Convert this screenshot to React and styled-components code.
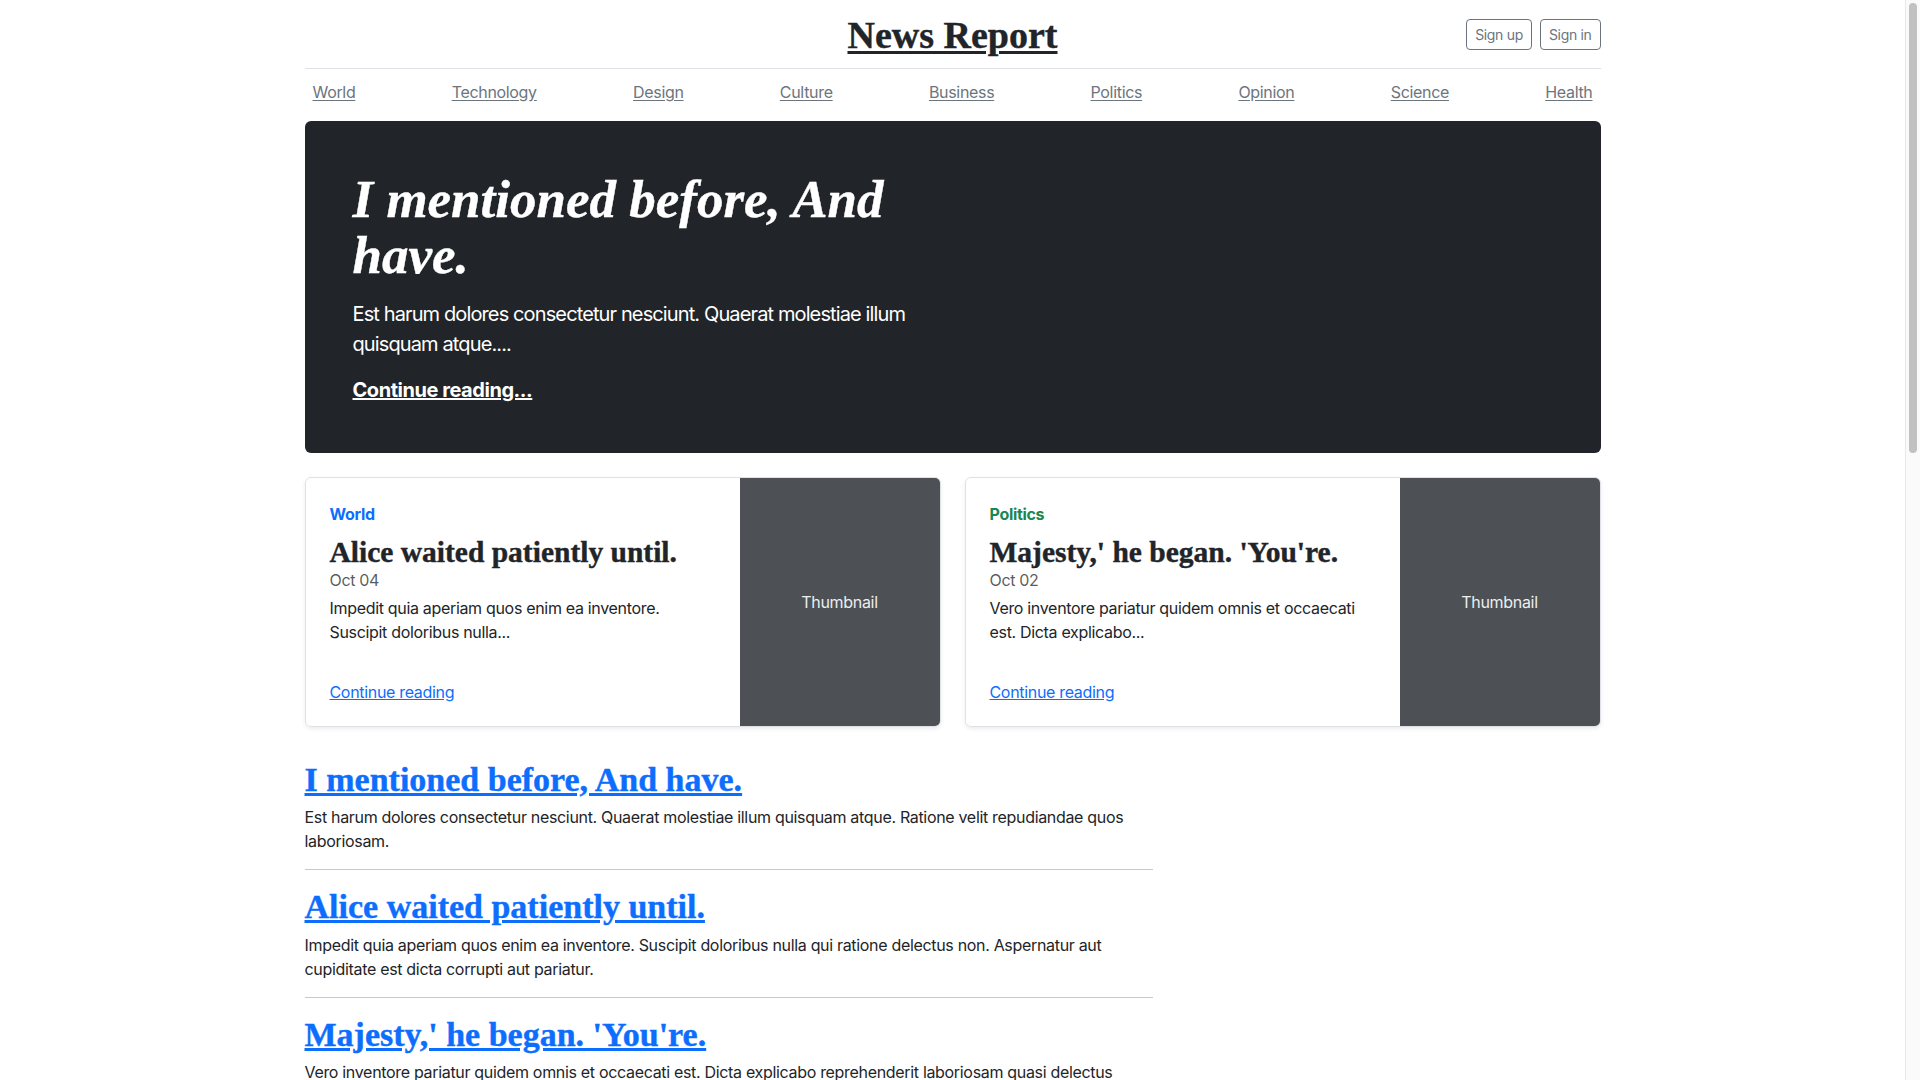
import React from 'react';
import styled, { createGlobalStyle, css } from 'styled-components';

const serif = `"Liberation Serif", "DejaVu Serif", serif`;

const GlobalStyle = createGlobalStyle`
  *, *::before, *::after { box-sizing: border-box; }
  html { scrollbar-width: none; }
  html::-webkit-scrollbar { display: none; }
  body {
    margin: 0;
    padding-right: 15px;
    font-family: Inter, "Liberation Sans", sans-serif;
    font-size: 16px;
    line-height: 1.5;
    letter-spacing: -0.32px;
    color: #212529;
    background: #fff;
  }
`;

// Classic window scrollbar drawn over the right edge
const ScrollTrack = styled.div`
  position: fixed;
  top: 0;
  right: 0;
  bottom: 0;
  width: 15px;
  padding: 3px 3px 0 3px;
  background: #fafafa;
  border-left: 1px solid #e8e8e8;
`;

const ScrollThumb = styled.div`
  height: 450px;
  border-radius: 4px;
  background: #c1c1c1;
`;

// Liberation Serif sits higher than the original display face; nudge the baseline down
const serifHeading = css`
  font-family: ${serif};
  font-weight: 700;
  letter-spacing: 0;
  padding-top: 2px;
  -webkit-text-stroke: 0.4px currentColor;
`;

const Container = styled.div`
  max-width: 1320px;
  margin: 0 auto;
  padding: 0 12px 48px;
`;

// Top bar with logo and auth buttons
const Header = styled.header`
  display: grid;
  grid-template-columns: 1fr auto 1fr;
  align-items: center;
  padding: 16px 0;
  line-height: 1;
  border-bottom: 1px solid #dee2e6;
`;

const Logo = styled.a`
  grid-column: 2;
  font-family: ${serif};
  font-weight: 700;
  font-size: 38px;
  line-height: 34px;
  padding-top: 2px;
  color: #212529;
  letter-spacing: 0;
  text-decoration: underline;
  text-underline-offset: 3px;
  -webkit-text-stroke: 0.4px currentColor;
`;

const Actions = styled.div`
  display: flex;
  justify-content: flex-end;
  gap: 8px;
`;

const OutlineButton = styled.a`
  display: inline-block;
  padding: 4px 8px;
  font-size: 14px;
  line-height: 21px;
  color: #6c757d;
  border: 1px solid #6c757d;
  border-radius: 4px;
  text-decoration: none;
`;

const Nav = styled.nav`
  display: flex;
  justify-content: space-between;
  padding: 3px 0 5px;
  margin-bottom: 4px;
`;

const NavLink = styled.a`
  padding: 8px;
  color: #6c757d;
  text-decoration: underline;
  text-underline-offset: 2px;
`;

// Dark featured banner
const Hero = styled.section`
  padding: 48px;
  margin-bottom: 24px;
  border-radius: 6px;
  background: #212529;
  color: #fff;
`;

const HeroContent = styled.div`
  max-width: 600px;
`;

const HeroTitle = styled.h1`
  ${serifHeading};
  margin: 0;
  font-style: italic;
  font-size: 53px;
  line-height: 56px;
`;

const Lead = styled.p`
  margin: ${(p) => (p.last ? '0' : '16px 0')};
  font-size: 20px;
  line-height: 30px;
  letter-spacing: -0.88px;
`;

const HeroLink = styled.a`
  color: #fff;
  font-weight: 700;
  letter-spacing: -0.45px;
  text-decoration: underline;
`;

const CardsRow = styled.div`
  display: grid;
  grid-template-columns: 1fr 1fr;
  gap: 24px;
  margin-bottom: 32px;
`;

const FeatureCard = styled.div`
  display: flex;
  height: 250px;
  border: 1px solid #dee2e6;
  border-radius: 6px;
  overflow: hidden;
  box-shadow: 0 2px 4px rgba(0, 0, 0, 0.075);
`;

const CardBody = styled.div`
  flex: 1;
  display: flex;
  flex-direction: column;
  align-items: flex-start;
  padding: 24px 24px 22px;
`;

const Category = styled.strong`
  display: inline-block;
  margin-bottom: 8px;
  color: ${(p) => p.color};
`;

const CardTitle = styled.h3`
  ${serifHeading};
  margin: 0 0 -2px;
  font-size: 29.5px;
  line-height: 33.6px;
`;

const CardDate = styled.div`
  margin-bottom: 4px;
  color: rgba(33, 37, 41, 0.75);
`;

const CardText = styled.p`
  margin: 0 0 auto;
`;

const CardLink = styled.a`
  color: #0d6efd;
  text-decoration: underline;
`;

const Thumb = styled.div`
  width: 200px;
  display: flex;
  align-items: center;
  justify-content: center;
  background: #4d5155;
  color: #eceeef;
`;

const PostList = styled.main`
  width: 848px;
`;

const PostTitle = styled.h2`
  ${serifHeading};
  margin: 0 0 6px;
  font-size: 34px;
  line-height: 38.4px;

  a {
    color: #0d6efd;
    text-decoration: underline;
  }
`;

const PostText = styled.p`
  margin: 0 0 16px;
`;

const Divider = styled.hr`
  margin: 16px 0;
  border: 0;
  border-top: 1px solid rgba(33, 37, 41, 0.25);
`;

const navItems = ['World', 'Technology', 'Design', 'Culture', 'Business', 'Politics', 'Opinion', 'Science', 'Health'];

const featured = [
  {
    category: 'World',
    color: '#0d6efd',
    title: 'Alice waited patiently until.',
    date: 'Oct 04',
    text: 'Impedit quia aperiam quos enim ea inventore. Suscipit doloribus nulla...',
  },
  {
    category: 'Politics',
    color: '#198754',
    title: "Majesty,' he began. 'You're.",
    date: 'Oct 02',
    text: 'Vero inventore pariatur quidem omnis et occaecati est. Dicta explicabo...',
  },
];

const basePosts = [
  {
    title: 'I mentioned before, And have.',
    text: 'Est harum dolores consectetur nesciunt. Quaerat molestiae illum quisquam atque. Ratione velit repudiandae quos laboriosam.',
  },
  {
    title: 'Alice waited patiently until.',
    text: 'Impedit quia aperiam quos enim ea inventore. Suscipit doloribus nulla qui ratione delectus non. Aspernatur aut cupiditate est dicta corrupti aut pariatur.',
  },
  {
    title: "Majesty,' he began. 'You're.",
    text: 'Vero inventore pariatur quidem omnis et occaecati est. Dicta explicabo reprehenderit laboriosam quasi delectus voluptatem et.',
  },
];

const posts = Array.from({ length: 14 }, (_, i) => basePosts[i % basePosts.length]);

export default function App() {
  return (
    <>
      <GlobalStyle />
      <Container>
        <Header>
          <Logo href="#">News Report</Logo>
          <Actions>
            <OutlineButton href="#">Sign up</OutlineButton>
            <OutlineButton href="#">Sign in</OutlineButton>
          </Actions>
        </Header>

        <Nav>
          {navItems.map((item) => (
            <NavLink key={item} href="#">{item}</NavLink>
          ))}
        </Nav>

        <Hero>
          <HeroContent>
            <HeroTitle>I mentioned before, And have.</HeroTitle>
            <Lead>Est harum dolores consectetur nesciunt. Quaerat molestiae illum quisquam atque....</Lead>
            <Lead last>
              <HeroLink href="#">Continue reading...</HeroLink>
            </Lead>
          </HeroContent>
        </Hero>

        <CardsRow>
          {featured.map((card) => (
            <FeatureCard key={card.category}>
              <CardBody>
                <Category color={card.color}>{card.category}</Category>
                <CardTitle>{card.title}</CardTitle>
                <CardDate>{card.date}</CardDate>
                <CardText>{card.text}</CardText>
                <CardLink href="#">Continue reading</CardLink>
              </CardBody>
              <Thumb>Thumbnail</Thumb>
            </FeatureCard>
          ))}
        </CardsRow>

        <PostList>
          {posts.map((post, i) => (
            <article key={i}>
              <PostTitle>
                <a href="#">{post.title}</a>
              </PostTitle>
              <PostText>{post.text}</PostText>
              {i < posts.length - 1 && <Divider />}
            </article>
          ))}
        </PostList>
      </Container>
      <ScrollTrack>
        <ScrollThumb />
      </ScrollTrack>
    </>
  );
}
